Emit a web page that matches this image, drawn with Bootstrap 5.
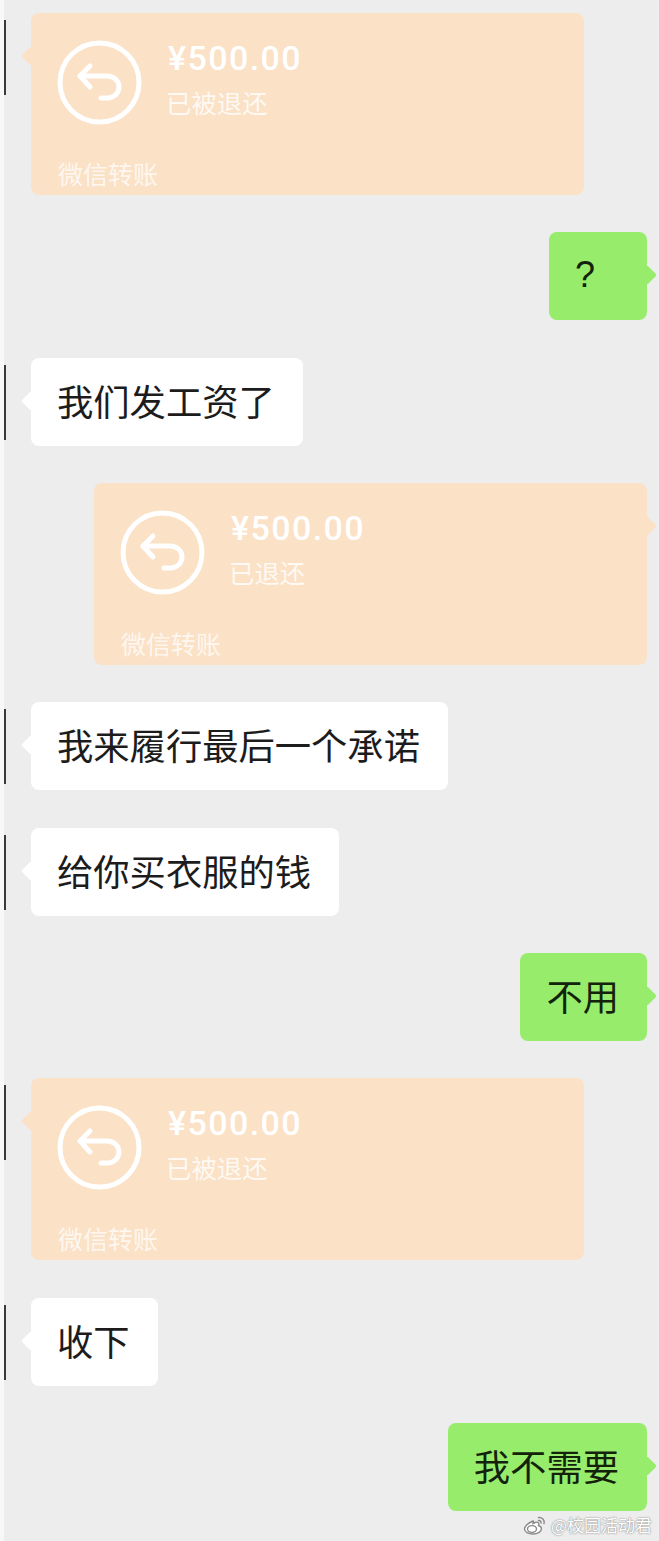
<!DOCTYPE html>
<html lang="zh-CN">
<head>
    <meta charset="UTF-8">
    <meta name="viewport" content="width=device-width, initial-scale=1.0">
    <title>聊天记录</title>
    <link href="https://cdn.jsdelivr.net/npm/bootstrap@5.3.2/dist/css/bootstrap.min.css" rel="stylesheet">
    <style>
        body { background: #ededed; font-family: "Noto Sans CJK SC", "Liberation Sans", sans-serif; overflow: hidden; }
        .chat-page { position: relative; width: 659px; height: 1541px; padding: 13px 12px 0 31px; gap: 37.33px; }
        .chat-page::before { content: ""; position: absolute; left: 0; top: 0; bottom: 0; width: 4px; background: #f8f8f8; }
        .msg-row { position: relative; }
        .msg-left::before { content: ""; position: absolute; left: -27px; top: 7px; width: 2px; height: 75px; background: #3a3a3a; }
        .bubble { position: relative; height: 88px; padding: 0 28px 0 26px; font-size: 36.3px; line-height: 85px; color: #1c1c1c; border-radius: 8px; background: #fff; white-space: nowrap; }
        .bubble::after { content: ""; position: absolute; top: 36px; width: 14px; height: 14px; background: inherit; transform: rotate(45deg); border-radius: 2px; }
        .msg-left .bubble::after { left: -7px; }
        .msg-right .bubble::after { right: -7px; }
        .bubble-me { background: #98ec6b; color: #13230b; }
        .ask-mark { font-family: "Liberation Sans", sans-serif; font-size: 36px; width: 98px; }
        .transfer { position: relative; width: 553px; height: 182px; padding: 27px 27px 0; border-radius: 8px; background: #fbe1c6; color: #fff; }
        .transfer::after { content: ""; position: absolute; top: 36px; width: 14px; height: 14px; background: inherit; transform: rotate(45deg); border-radius: 2px; }
        .msg-left .transfer::after { left: -7px; }
        .msg-right .transfer::after { right: -7px; }
        .transfer-body { gap: 25px; height: 118px; margin-left: -1px; }
        .refund-icon { width: 85px; height: 85px; flex-shrink: 0; }
        .amount { font-family: "Roboto", sans-serif; font-weight: 500; font-size: 34px; line-height: 36px; letter-spacing: 1.4px; margin-left: 1px; }
        .refund-state { font-size: 25.4px; line-height: 36px; margin-top: 8px; margin-left: -1px; opacity: .8; }
        .transfer-foot { font-size: 25px; line-height: 30px; opacity: .75; }
        .watermark { position: absolute; right: 7px; bottom: 3px; gap: 4px; font-size: 17px; line-height: 26px; color: #fff; text-shadow: 0 0 2px #8d8d8d, 0 0 1px #8d8d8d; }
    </style>
</head>
<body>
    <div class="chat-page d-flex flex-column">
        <!-- refunded transfer -->
        <div class="msg-row msg-left d-flex">
            <div class="transfer">
                <div class="transfer-body d-flex">
                    <svg class="refund-icon" viewBox="0 0 85 85" fill="none" stroke="#fff" stroke-width="5" stroke-linecap="round" stroke-linejoin="round">
                        <circle cx="42.5" cy="42.5" r="39.5"/>
                        <path d="M33 26 L23 36 L33 47"/>
                        <path d="M23 36 H50 C57 36 62 41 62 47 C62 53 57 58 50 58 H44"/>
                    </svg>
                    <div>
                        <div class="amount">¥500.00</div>
                        <div class="refund-state">已被退还</div>
                    </div>
                </div>
                <div class="transfer-foot">微信转账</div>
            </div>
        </div>

        <div class="msg-row msg-right d-flex justify-content-end">
            <div class="bubble bubble-me ask-mark">?</div>
        </div>

        <div class="msg-row msg-left d-flex">
            <div class="bubble">我们发工资了</div>
        </div>

        <div class="msg-row msg-right d-flex justify-content-end">
            <div class="transfer">
                <div class="transfer-body d-flex">
                    <svg class="refund-icon" viewBox="0 0 85 85" fill="none" stroke="#fff" stroke-width="5" stroke-linecap="round" stroke-linejoin="round">
                        <circle cx="42.5" cy="42.5" r="39.5"/>
                        <path d="M33 26 L23 36 L33 47"/>
                        <path d="M23 36 H50 C57 36 62 41 62 47 C62 53 57 58 50 58 H44"/>
                    </svg>
                    <div>
                        <div class="amount">¥500.00</div>
                        <div class="refund-state">已退还</div>
                    </div>
                </div>
                <div class="transfer-foot">微信转账</div>
            </div>
        </div>

        <div class="msg-row msg-left d-flex">
            <div class="bubble">我来履行最后一个承诺</div>
        </div>

        <div class="msg-row msg-left d-flex">
            <div class="bubble">给你买衣服的钱</div>
        </div>

        <div class="msg-row msg-right d-flex justify-content-end">
            <div class="bubble bubble-me">不用</div>
        </div>

        <div class="msg-row msg-left d-flex">
            <div class="transfer">
                <div class="transfer-body d-flex">
                    <svg class="refund-icon" viewBox="0 0 85 85" fill="none" stroke="#fff" stroke-width="5" stroke-linecap="round" stroke-linejoin="round">
                        <circle cx="42.5" cy="42.5" r="39.5"/>
                        <path d="M33 26 L23 36 L33 47"/>
                        <path d="M23 36 H50 C57 36 62 41 62 47 C62 53 57 58 50 58 H44"/>
                    </svg>
                    <div>
                        <div class="amount">¥500.00</div>
                        <div class="refund-state">已被退还</div>
                    </div>
                </div>
                <div class="transfer-foot">微信转账</div>
            </div>
        </div>

        <div class="msg-row msg-left d-flex">
            <div class="bubble">收下</div>
        </div>

        <div class="msg-row msg-right d-flex justify-content-end">
            <div class="bubble bubble-me">我不需要</div>
        </div>

        <!-- weibo watermark -->
        <div class="watermark d-flex align-items-center">
            <svg width="24" height="20" viewBox="0 0 24 20" fill="none" stroke="#8a8a8a" stroke-width="1.4" stroke-linecap="round">
                <path d="M10 6 C5 8 1.5 11.5 1.5 14 C1.5 17 5.5 19 10 19 C15 19 18.5 16.5 18.5 13.5 C18.5 11.5 16.5 11 15.5 10.5 C16.5 8 15 6.5 12 7.5 C11 8 10 8.5 10 8.5 C10.5 6.5 10.5 5.8 10 6 Z" fill="#fff"/>
                <ellipse cx="9" cy="14" rx="4.5" ry="3.4"/>
                <path d="M15.5 2.5 C19 2 22 5 21 8.5"/>
                <path d="M15.5 5.5 C17 5.3 18.5 6.5 18 8"/>
            </svg>
            <span>@校园活动君</span>
        </div>
    </div>

    <script src="https://cdn.jsdelivr.net/npm/bootstrap@5.3.2/dist/js/bootstrap.bundle.min.js"></script>
</body>
</html>
